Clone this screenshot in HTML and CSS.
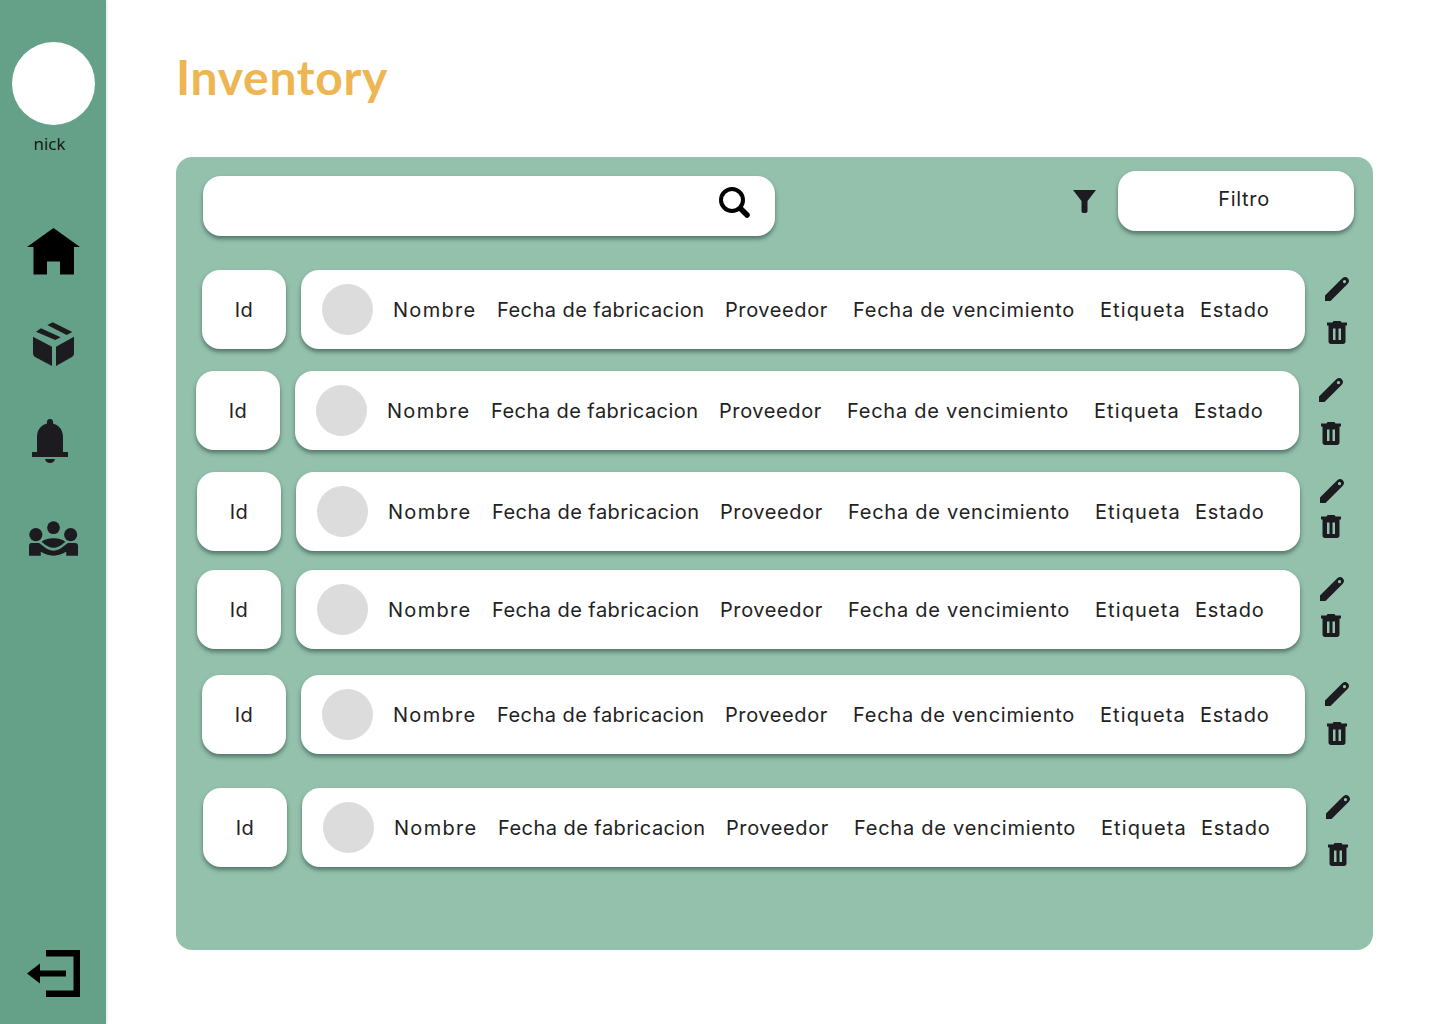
FILE: index.html
```html
<!DOCTYPE html>
<html>
	<head>
		<meta charset="utf-8" />
		<title>Inventory</title>
		<link rel="stylesheet" href="styles.css">
	</head>
	<body>
		<svg class="defs" width="0" height="0">
			<symbol id="pencil" viewBox="0 0 24 24"><path fill-rule="evenodd" d="M0 24V18.500L15.500 3C17.500 1 18.500 0 20 0 22 0 24 2 24 4 24 5.500 23 6.500 21 8.500L5.500 24ZM19.500 3A1.600 1.600 0 1 0 19.510 3Z"/></symbol>
			<symbol id="trash" viewBox="0 0 20 23"><path fill-rule="evenodd" d="M6.500 0H13.500L14.500 1.500H20V4.500H18.500V20.500C18.500 22 17.500 23 16 23H4C2.500 23 1.500 22 1.500 20.500V4.500H0V1.500H5.500ZM6 7.500V19H8.500V7.500ZM11.500 7.500V19H14V7.500Z"/></symbol>
		</svg>
		<div class="page">
			<div class="sidebar">
				<div class="avatar"></div>
				<div class="username">nick</div>
				<div class="nav">
					<svg class="nav-icon home" viewBox="0 0 53 47"><path d="M26.500 0 53 19H47V46.500H33V33.500H20V46.500H6.500V19H0Z" fill="#000"/></svg>
					<svg class="nav-icon box" viewBox="0 0 41 45"><path d="M14.300 3 19.700.3 39.300 10 33.700 13ZM3 9.700 8 6.300 27.700 15.300 22.300 18ZM0 14.700 19 24.700V44L3 35.500C1 34.500 0 33 0 31ZM23 24.700 41 14.700V31C41 33 40 34.500 38 35.500L23 44Z" fill="#1c1b20"/></svg>
					<svg class="nav-icon bell" viewBox="0 0 36 44"><path d="M18 0C20.500 0 21.500 2 21 4.500 26 6 31 10 31 18V33H36V38H0V33H5V18C5 10 10 6 15 4.500 14.500 2 15.500 0 18 0ZM13 40H23C22.500 42.500 20.500 44 18 44 15.500 44 13.500 42.500 13 40Z" fill="#1c1b20"/></svg>
					<svg class="nav-icon team" viewBox="0 0 50 35"><g fill="#1c1b20"><circle cx="25" cy="6.500" r="6.500"/><circle cx="7" cy="13.500" r="6.700"/><circle cx="42.500" cy="13.500" r="6.700"/><path d="M13 21C17 16 33 16 37 21 33 24 30 27 25 27 20 27 17 24 13 21Z"/><path d="M2.500 22H10C14 24 17 29 25 30 33 29 36 24 40 22H47C49 22 50 23 50 25V35H38V31C34 33 30 35 25 35 20 35 16 33 12 31V35H0V25C0 23 1 22 2.500 22Z"/></g></svg>
				</div>
				<svg class="logout" viewBox="0 0 53 47"><path d="M19 0H53V47H19V40.500H46.500V6.500H19ZM0 23.500 13 13.500V20.500H39V26.500H13V33.500Z" fill="#000"/></svg>
			</div>
			<div class="content">
				<h1 class="title">Inventory</h1>
				<div class="panel">
					<div class="toolbar">
						<div class="search">
							<svg class="search-icon" viewBox="0 0 31 31"><circle cx="13" cy="13" r="11" fill="none" stroke="#000" stroke-width="4"/><path d="M22 22 28 28" stroke="#000" stroke-width="5.500" stroke-linecap="round"/></svg>
						</div>
						<svg class="filter-icon" viewBox="0 0 23 23"><path d="M0 0H23L14.500 11V21C14.500 22.500 13.500 23 12 23H11C9.500 23 8.500 22.500 8.500 21V11Z" fill="#1c1b20"/></svg>
						<button class="filter-btn">Filtro</button>
					</div>
					<div class="rows">
						<div class="row row1">
							<div class="id-card">Id</div>
							<div class="row-main">
								<div class="thumb"></div>
								<span class="c-nombre">Nombre</span>
								<span class="c-fab">Fecha de fabricacion</span>
								<span class="c-prov">Proveedor</span>
								<span class="c-venc">Fecha de vencimiento</span>
								<span class="c-etiq">Etiqueta</span>
								<span class="c-estado">Estado</span>
							</div>
							<div class="actions">
								<svg class="pencil"><use href="#pencil"/></svg>
								<svg class="trash"><use href="#trash"/></svg>
							</div>
						</div>
						<div class="row row2">
							<div class="id-card">Id</div>
							<div class="row-main">
								<div class="thumb"></div>
								<span class="c-nombre">Nombre</span>
								<span class="c-fab">Fecha de fabricacion</span>
								<span class="c-prov">Proveedor</span>
								<span class="c-venc">Fecha de vencimiento</span>
								<span class="c-etiq">Etiqueta</span>
								<span class="c-estado">Estado</span>
							</div>
							<div class="actions">
								<svg class="pencil"><use href="#pencil"/></svg>
								<svg class="trash"><use href="#trash"/></svg>
							</div>
						</div>
						<div class="row row3">
							<div class="id-card">Id</div>
							<div class="row-main">
								<div class="thumb"></div>
								<span class="c-nombre">Nombre</span>
								<span class="c-fab">Fecha de fabricacion</span>
								<span class="c-prov">Proveedor</span>
								<span class="c-venc">Fecha de vencimiento</span>
								<span class="c-etiq">Etiqueta</span>
								<span class="c-estado">Estado</span>
							</div>
							<div class="actions">
								<svg class="pencil"><use href="#pencil"/></svg>
								<svg class="trash"><use href="#trash"/></svg>
							</div>
						</div>
						<div class="row row4">
							<div class="id-card">Id</div>
							<div class="row-main">
								<div class="thumb"></div>
								<span class="c-nombre">Nombre</span>
								<span class="c-fab">Fecha de fabricacion</span>
								<span class="c-prov">Proveedor</span>
								<span class="c-venc">Fecha de vencimiento</span>
								<span class="c-etiq">Etiqueta</span>
								<span class="c-estado">Estado</span>
							</div>
							<div class="actions">
								<svg class="pencil"><use href="#pencil"/></svg>
								<svg class="trash"><use href="#trash"/></svg>
							</div>
						</div>
						<div class="row row5">
							<div class="id-card">Id</div>
							<div class="row-main">
								<div class="thumb"></div>
								<span class="c-nombre">Nombre</span>
								<span class="c-fab">Fecha de fabricacion</span>
								<span class="c-prov">Proveedor</span>
								<span class="c-venc">Fecha de vencimiento</span>
								<span class="c-etiq">Etiqueta</span>
								<span class="c-estado">Estado</span>
							</div>
							<div class="actions">
								<svg class="pencil"><use href="#pencil"/></svg>
								<svg class="trash"><use href="#trash"/></svg>
							</div>
						</div>
						<div class="row row6">
							<div class="id-card">Id</div>
							<div class="row-main">
								<div class="thumb"></div>
								<span class="c-nombre">Nombre</span>
								<span class="c-fab">Fecha de fabricacion</span>
								<span class="c-prov">Proveedor</span>
								<span class="c-venc">Fecha de vencimiento</span>
								<span class="c-etiq">Etiqueta</span>
								<span class="c-estado">Estado</span>
							</div>
							<div class="actions">
								<svg class="pencil"><use href="#pencil"/></svg>
								<svg class="trash"><use href="#trash"/></svg>
							</div>
						</div>
					</div>
				</div>
			</div>
		</div>
	</body>
</html>
```

FILE: styles.css
```css
*{
	padding: 0;
	margin: 0;
	box-sizing: border-box;
}
html,body{
	height: 100%;
	width: 100%;
	background-color: white;
}
.defs{
	display: block;
	height: 0;
}
.page{
	display: flex;
	height: 1024px;
	overflow: hidden;
}
.sidebar{
	width: 106px;
	height: 100%;
	flex-shrink: 0;
	background-color: #64a188;
	box-shadow: 1px 0 3px rgba(0,0,0,0.12);
	display: flex;
	flex-direction: column;
	align-items: center;
	padding-top: 42px;
}
.avatar{
	width: 83px;
	height: 83px;
	border-radius: 50%;
	background-color: white;
}
.username{
	font-family: "Open Sans", sans-serif;
	font-size: 17px;
	line-height: 23px;
	color: #111;
	margin-top: 7px;
	margin-right: 7px;
}
.nav{
	display: flex;
	flex-direction: column;
	align-items: center;
	margin-top: 73px;
}
.nav-icon{
	display: block;
}
.home{
	width: 53px;
	height: 47px;
}
.box{
	width: 41px;
	height: 45px;
	margin-top: 47px;
}
.bell{
	width: 36px;
	height: 44px;
	margin-top: 52px;
	margin-right: 6px;
}
.team{
	width: 49px;
	height: 35px;
	margin-top: 58px;
}
.logout{
	width: 53px;
	height: 47px;
	margin-top: auto;
	margin-bottom: 27px;
}
.content{
	flex: 1;
	padding-left: 70px;
	padding-top: 47px;
}
.title{
	font-family: "Lato", sans-serif;
	font-size: 48px;
	line-height: 60px;
	font-weight: 700;
	letter-spacing: 0.7px;
	color: #edb653;
}
.panel{
	width: 1197px;
	height: 793px;
	margin-top: 50px;
	background-color: #94c1ac;
	border-radius: 16px;
}
.toolbar{
	display: flex;
	padding: 14px 19px 0 27px;
	align-items: flex-start;
}
.search{
	width: 572px;
	height: 60px;
	margin-top: 5px;
	background-color: white;
	border-radius: 18px;
	box-shadow: 0 3px 4px rgba(40,70,60,0.6);
	display: flex;
	align-items: center;
	justify-content: flex-end;
	padding-right: 25px;
	padding-bottom: 8px;
}
.search-icon{
	width: 31px;
	height: 31px;
}
.filter-icon{
	width: 23px;
	height: 23px;
	margin-left: 298px;
	margin-top: 19px;
}
.filter-btn{
	width: 236px;
	height: 60px;
	margin-left: 22px;
	padding-left: 16px;
	padding-bottom: 4px;
	border: none;
	background-color: white;
	border-radius: 18px;
	box-shadow: 0 3px 4px rgba(40,70,60,0.6);
	font-family: "Inter", sans-serif;
	font-size: 20px;
	letter-spacing: 0.7px;
	color: #222;
}
.row{
	display: flex;
	align-items: flex-start;
}
.row1{ margin-top: 34px; margin-left: 26px; }
.row2{ margin-top: 22px; margin-left: 20px; }
.row3{ margin-top: 22px; margin-left: 21px; }
.row4{ margin-top: 19px; margin-left: 21px; }
.row5{ margin-top: 26px; margin-left: 26px; }
.row6{ margin-top: 34px; margin-left: 27px; }
.id-card{
	width: 84px;
	height: 79px;
	background-color: white;
	border-radius: 18px;
	box-shadow: 0 3px 4px rgba(40,70,60,0.6);
	display: flex;
	align-items: center;
	justify-content: center;
	font-family: "Inter", sans-serif;
	font-size: 20px;
	letter-spacing: 0.5px;
	color: #222;
}
.row-main{
	width: 1004px;
	height: 79px;
	margin-left: 15px;
	padding-left: 21px;
	background-color: white;
	border-radius: 18px;
	box-shadow: 0 3px 4px rgba(40,70,60,0.6);
	display: grid;
	grid-template-columns: 71px 104px 228px 128px 247px 100px auto;
	align-items: center;
	font-family: "Inter", sans-serif;
	font-size: 20px;
	color: #222;
	white-space: nowrap;
}
.c-nombre{ letter-spacing: 1.3px; }
.c-fab{ letter-spacing: 0.45px; }
.c-prov{ letter-spacing: 0.6px; }
.c-venc{ letter-spacing: 0.75px; }
.c-etiq{ letter-spacing: 1.1px; }
.c-estado{ letter-spacing: 0.8px; }
.thumb{
	width: 51px;
	height: 51px;
	border-radius: 50%;
	background-color: #dcdcdc;
}
.actions{
	display: flex;
	flex-direction: column;
	align-items: center;
	width: 24px;
	margin-left: 20px;
	padding-top: 7px;
}
.actions svg{
	display: block;
	fill: #1c1b20;
}
.pencil{
	width: 24px;
	height: 24px;
}
.trash{
	width: 20px;
	height: 23px;
	margin-top: 20px;
}
.row3 .trash{ margin-top: 12px; margin-right: 2px; }
.row4 .trash{ margin-top: 13px; margin-right: 2px; }
.row5 .trash{ margin-top: 16px; }
.row6 .trash{ margin-top: 24px; }
```
